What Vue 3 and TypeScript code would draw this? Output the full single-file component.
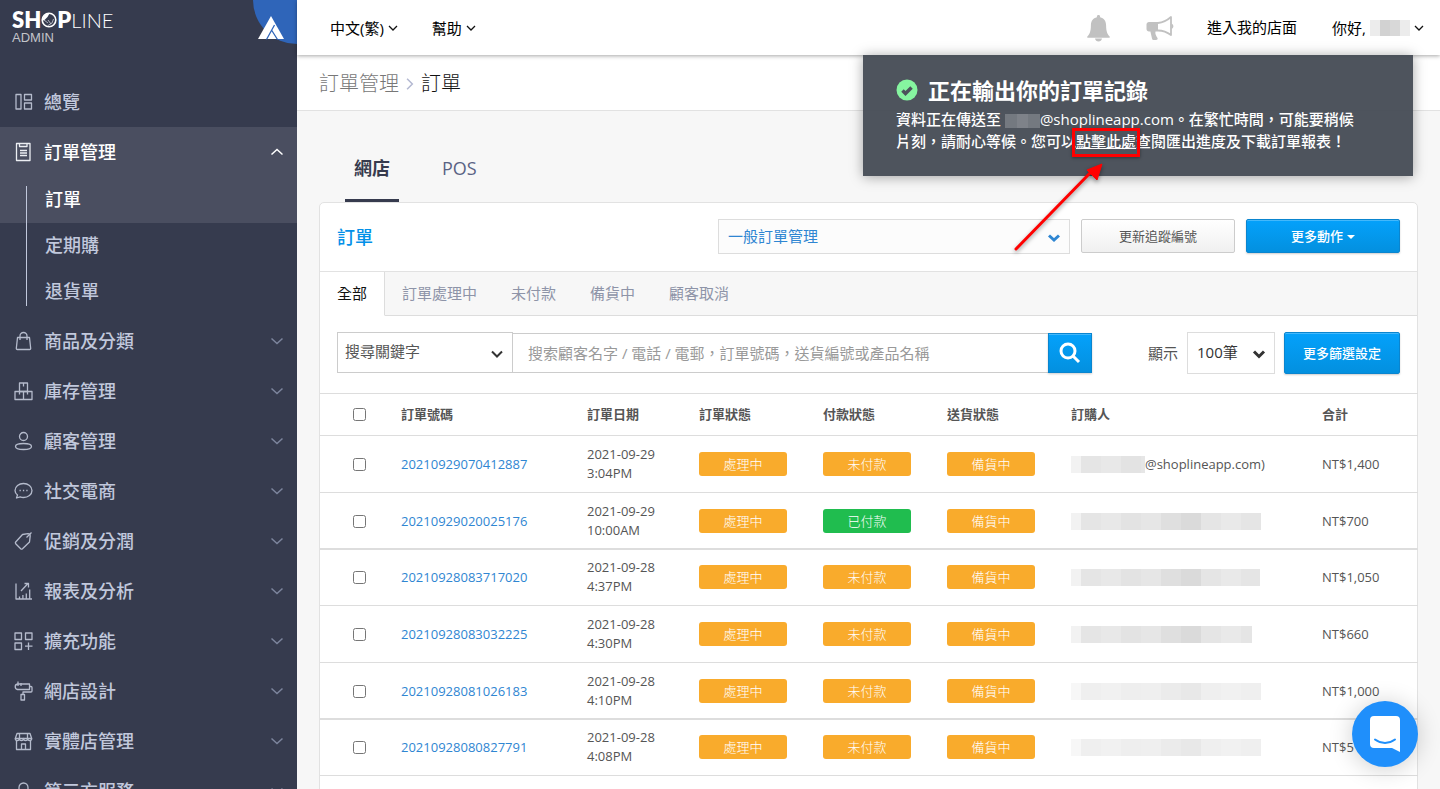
<script setup lang="ts">
interface NavItem {
  label: string
  icon: string[]
}

interface Order {
  id: string
  date: string
  time: string
  payment: string
  paid: boolean
  mask: number[]
  faded: boolean
  suffix: string
  total: string
}

const navItems: NavItem[] = [
  { label: '商品及分類', icon: ['M3.500 6.500h12l1.200 11a1 1 0 0 1-1 1H3.300a1 1 0 0 1-1-1z', 'M6 9V5a3.500 3.500 0 0 1 7 0v4'] },
  { label: '庫存管理', icon: ['M1 10.500h17v8H1z', 'M5.500 2h8v8.500h-8z', 'M9.500 10.500v8', 'M9.500 2v3.500', 'M5.500 10.500v3', 'M13.500 10.500v3'] },
  { label: '顧客管理', icon: ['M9.500 1.500a4 4 0 1 1 0 8a4 4 0 1 1 0-8z', 'M9.500 12.500c4.500 0 8 1 8 3s-3.500 3-8 3s-8-1-8-3s3.500-3 8-3z'] },
  { label: '社交電商', icon: ['M9.500 2.500c4.600 0 8.500 3 8.500 7s-3.900 7-8.500 7c-1.200 0-2.300-.2-3.300-.6L2.500 17l1-3C2 12.800 1 11.200 1 9.500c0-4 3.900-7 8.500-7z', 'M5.500 9.500h1.300M8.900 9.500h1.300M12.300 9.500h1.300'] },
  { label: '促銷及分潤', icon: ['M8.500 3.500l5.500-.8c1 0 2.200 1 2.200 2.200L15.500 11l-7 6.800c-.6.500-1.200.500-1.800 0l-5-5c-.5-.6-.5-1.200 0-1.800z', 'M12.500 6.500l5-5'] },
  { label: '報表及分析', icon: ['M2 2.500v15.500h16', 'M5.500 18v-2.500M8.900 18v-4M12.300 18v-5.500M15.700 18V8.500', 'M7 10l7-7.500M10.500 2.500h4v4'] },
  { label: '擴充功能', icon: ['M1 2h6.500v6.500H1z', 'M11.500 2h6.500v6.500h-6.500z', 'M1 12h6.500v6.500H1z', 'M14.500 11.500v7.500M11 15.200h7.500'] },
  { label: '網店設計', icon: ['M3.500 3h12v5.500h-12a2.800 2.800 0 0 1 0-5.500z', 'M4 .5v4.500M7 2v3', 'M15.500 5.500H17a1 1 0 0 1 1 1V10a1 1 0 0 1-1 1H9v2.500', 'M7 13.500h3.500v5.500H7z'] },
  { label: '實體店管理', icon: ['M3 2.500h13l1.700 5H1.300z', 'M1.300 7.500c0 2.700 4 2.700 4 0c0 2.700 4.200 2.700 4.200 0c0 2.700 4.200 2.700 4.200 0c0 2.700 4 2.700 4 0', 'M2.500 9.500v9h14v-9', 'M7.500 18.500v-5.500h4v5.500', 'M5.500 2.500v5M13.500 2.500v5'] },
  { label: '第三方服務', icon: ['M9.500 2a4.500 4.500 0 0 1 4.500 4.500v3H5v-3A4.500 4.500 0 0 1 9.500 2z', 'M2 9.500h15v9H2z'] },
]

const statusTabs = ['全部', '訂單處理中', '未付款', '備貨中', '顧客取消']

const orders: Order[] = [
  { id: '20210929070412887', date: '2021-09-29', time: '3:04PM', payment: '未付款', paid: false, mask: [10, 20, 20, 20, 4], faded: false, suffix: '@shoplineapp.com)', total: 'NT$1,400' },
  { id: '20210929020025176', date: '2021-09-29', time: '10:00AM', payment: '已付款', paid: true, mask: [10, 20, 20, 20, 20, 20, 20, 20, 20, 20], faded: false, suffix: '', total: 'NT$700' },
  { id: '20210928083717020', date: '2021-09-28', time: '4:37PM', payment: '未付款', paid: false, mask: [10, 20, 20, 20, 20, 20, 20, 20, 20, 19], faded: false, suffix: '', total: 'NT$1,050' },
  { id: '20210928083032225', date: '2021-09-28', time: '4:30PM', payment: '未付款', paid: false, mask: [10, 20, 20, 20, 20, 20, 20, 20, 20, 11], faded: false, suffix: '', total: 'NT$660' },
  { id: '20210928081026183', date: '2021-09-28', time: '4:10PM', payment: '未付款', paid: false, mask: [10, 20, 20, 20, 20, 20, 20, 20, 20, 20], faded: true, suffix: '', total: 'NT$1,000' },
  { id: '20210928080827791', date: '2021-09-28', time: '4:08PM', payment: '未付款', paid: false, mask: [10, 20, 20, 20, 20, 20, 20, 20, 20, 20], faded: true, suffix: '', total: 'NT$5' },
]

const shades = ['#f2f2f2', '#e5e5e5', '#e8e8e8', '#e3e3e3', '#e6e6e6', '#dfdfdf', '#dadada', '#e5e5e5', '#e9e9e9', '#e5e5e5']
</script>

<template>
  <div class="page">
    <aside class="sidebar">
      <div class="brand">
        <a href="#" class="logo" aria-label="SHOPLINE ADMIN">
          <span class="logo-name"><b>SH</b><svg class="logo-o" viewBox="0 0 16 16" aria-hidden="true"><circle cx="8" cy="8" r="6.800" fill="none" stroke="#fff" stroke-width="1.600" /><path d="M1.500 8a6.500 6.500 0 0 1 7-6.500L6.500 5 3 8.500z" fill="#fff" /><path d="M3 8l4 3M7 8l3 4M12.500 7l-1.500 4-4 2.500" fill="none" stroke="#cfd2da" stroke-width=".8" /></svg><b>P</b><span class="thin">LINE</span></span>
          <span class="logo-sub">ADMIN</span>
        </a>
        <svg class="corner" viewBox="0 0 44 44" aria-hidden="true">
          <circle cx="44" cy="0" r="44" fill="#2f65b9" />
          <path d="M18 16l13 23H5z" fill="#fff" />
          <path d="M21.500 25L13.500 39.500M18.500 30l6 9.500" fill="none" stroke="#2f65b9" stroke-width="1.300" />
        </svg>
      </div>

      <nav>
        <a href="#" class="nav-row">
          <svg class="nav-icon" viewBox="0 0 19 20"><path d="M2 2.500h5v14.500H2z" /><path d="M10.500 2.500h7v5.500h-7z" /><path d="M10.500 11h7v6h-7z" /></svg>
          <span>總覽</span>
        </a>
        <div class="group-open">
          <a href="#" class="nav-row active">
            <svg class="nav-icon" viewBox="0 0 19 20"><path d="M2.500 1.500h13.500v17h-13.500z" /><path d="M5.500 1.500v3h7.500v-3" /><path d="M6 8.500h7M6 11h7M6 13.500h7" /></svg>
            <span>訂單管理</span>
            <svg class="chev" viewBox="0 0 14 8"><path d="M1.500 6.500L7 1.500l5.500 5" /></svg>
          </a>
          <div class="sub">
            <a href="#" class="active">訂單</a>
            <a href="#">定期購</a>
            <a href="#">退貨單</a>
          </div>
        </div>
        <a v-for="item in navItems" :key="item.label" href="#" class="nav-row">
          <svg class="nav-icon" viewBox="0 0 19 20"><path v-for="d in item.icon" :key="d" :d="d" /></svg>
          <span>{{ item.label }}</span>
          <svg class="chev" viewBox="0 0 14 8"><path d="M1.500 1.500L7 6.500l5.500-5" /></svg>
        </a>
      </nav>
    </aside>

    <div class="main">
      <header class="topbar">
        <button type="button" class="top-link">中文(繁)<svg class="mini" viewBox="0 0 10 8"><path d="M1 2l4 4 4-4" /></svg></button>
        <button type="button" class="top-link help">幫助<svg class="mini" viewBox="0 0 10 8"><path d="M1 2l4 4 4-4" /></svg></button>
        <div class="top-right">
          <button type="button" class="icon-btn" aria-label="通知">
            <svg class="bell" viewBox="0 0 24 28"><path d="M12 1c1 0 1.600.7 1.600 1.600v.7c3.800.8 6 3.700 6 8.200 0 6 1.400 8.800 3.600 11v1.200H.8v-1.200c2.200-2.200 3.600-5 3.600-11 0-4.500 2.200-7.400 6-8.200v-.7C10.400 1.700 11 1 12 1z" /><path d="M8.500 24.500h7c-.3 1.800-1.700 3-3.500 3s-3.200-1.200-3.500-3z" /></svg>
          </button>
          <button type="button" class="icon-btn horn-btn" aria-label="公告">
            <svg class="horn" viewBox="0 0 28 26"><path d="M3 7h9v9.500H9.500c-.8 2 .8 4.500 2 6.500.5 1.200-.2 2-1.500 2H7.800c-1 0-1.500-.5-1.800-1.500l-1.600-7H3c-1.400 0-2.500-1-2.500-2.500V9.500C.5 8 1.600 7 3 7z" /><path d="M12 8c5-.5 9-2.500 13-6v18c-4-3-8-4.500-13-4.500" fill="none" stroke="#c1c1c1" stroke-width="1.800" stroke-linejoin="round" /><path d="M25.500 8.500c2.500 1 2.500 4.500 0 5.500z" /></svg>
          </button>
          <a href="#" class="top-text">進入我的店面</a>
          <button type="button" class="top-link user">你好,<span class="user-mask"><i /><i /><i /><i /></span><svg class="mini" viewBox="0 0 10 8"><path d="M1 2l4 4 4-4" /></svg></button>
        </div>
      </header>

      <div class="crumbs">
        <a href="#">訂單管理</a>
        <svg viewBox="0 0 8 12"><path d="M1.500 1.500L6 6l-4.500 4.500" /></svg>
        <span>訂單</span>
      </div>

      <main class="content">
        <div class="shop-tabs">
          <button type="button" class="on">網店</button>
          <button type="button">POS</button>
        </div>

        <section class="card">
          <div class="card-head">
            <h1>訂單</h1>
            <div class="select-wrap mode">
              <select aria-label="訂單管理模式"><option>一般訂單管理</option></select>
              <svg viewBox="0 0 14 10"><path d="M2 2.500l5 4.500 5-4.500" /></svg>
            </div>
            <button type="button" class="btn plain">更新追蹤編號</button>
            <button type="button" class="btn blue">更多動作<i class="caret" /></button>
          </div>

          <div class="status-tabs">
            <button v-for="(t, i) in statusTabs" :key="t" type="button" :class="{ on: i === 0 }">{{ t }}</button>
            <span class="fill" />
          </div>

          <form class="filters" @submit.prevent>
            <div class="search">
              <div class="select-wrap keyword">
                <select aria-label="搜尋欄位"><option>搜尋關鍵字</option></select>
                <svg viewBox="0 0 14 10"><path d="M2 2.500l5 5 5-5" /></svg>
              </div>
              <input type="text" aria-label="搜尋" placeholder="搜索顧客名字 / 電話 / 電郵，訂單號碼，送貨編號或產品名稱">
              <button type="submit" class="btn blue go" aria-label="搜尋">
                <svg viewBox="0 0 22 22"><circle cx="9" cy="9" r="7" /><path d="M14 14l6 6" /></svg>
              </button>
            </div>
            <label for="page-size">顯示</label>
            <div class="select-wrap size">
              <select id="page-size"><option>100筆</option></select>
              <svg viewBox="0 0 14 10"><path d="M2 2.500l5 5 5-5" /></svg>
            </div>
            <button type="button" class="btn blue more">更多篩選設定</button>
          </form>

          <table>
            <colgroup>
              <col class="c-check"><col class="c-id"><col class="c-date"><col class="c-state"><col class="c-state"><col class="c-ship"><col class="c-buyer"><col class="c-total">
            </colgroup>
            <thead>
              <tr>
                <th class="check"><input type="checkbox" aria-label="全選"></th>
                <th>訂單號碼</th>
                <th>訂單日期</th>
                <th>訂單狀態</th>
                <th>付款狀態</th>
                <th>送貨狀態</th>
                <th>訂購人</th>
                <th>合計</th>
              </tr>
            </thead>
            <tbody>
              <tr v-for="o in orders" :key="o.id">
                <td class="check"><input type="checkbox" :aria-label="o.id"></td>
                <td><a href="#">{{ o.id }}</a></td>
                <td>{{ o.date }}<br>{{ o.time }}</td>
                <td><span class="badge">處理中</span></td>
                <td><span class="badge" :class="{ green: o.paid }">{{ o.payment }}</span></td>
                <td><span class="badge">備貨中</span></td>
                <td>
                  <div class="buyer">
                    <span class="mask" :class="{ faded: o.faded }"><i v-for="(w, i) in o.mask" :key="i" :style="{ width: w + 'px', background: shades[i] }" /></span>{{ o.suffix }}
                  </div>
                </td>
                <td>{{ o.total }}</td>
              </tr>
            </tbody>
          </table>
        </section>
      </main>
    </div>

    <div class="toast" role="status">
      <h2>
        <svg viewBox="0 0 22 22" aria-hidden="true"><circle cx="11" cy="11" r="10.500" fill="#86f5a0" /><path d="M6.500 11.500l3 3 6-6" fill="none" stroke="#4c535b" stroke-width="3.500" /></svg>
        正在輸出你的訂單記錄
      </h2>
      <p>資料正在傳送至 <span class="mail-mask"><i /><i /><i /></span>@shoplineapp.com。在繁忙時間，可能要稍候<br>片刻，請耐心等候。您可以<span class="spot"><a href="#">點擊此處</a><svg class="arrow" viewBox="0 0 100 100" aria-hidden="true"><path d="M13 92L88 15" stroke="#f00" stroke-width="3" stroke-linecap="round" /><path d="M99 7L84 13l10 10z" fill="#f00" stroke="#f00" stroke-width="1" /></svg></span>查閱匯出進度及下載訂單報表！</p>
    </div>

    <button type="button" class="chat" aria-label="開啟對話">
      <svg viewBox="0 0 30 36"><path d="M4 0h22a4 4 0 0 1 4 4v32l-8-4H4a4 4 0 0 1-4-4V4a4 4 0 0 1 4-4z" fill="#fff" /><path d="M5 23.500c6 4.500 14 4.500 20 0" fill="none" stroke="#1f8ffb" stroke-width="2" stroke-linecap="round" /></svg>
    </button>
  </div>
</template>

<style>
body {
  background: #f7f7f7;
}
</style>

<style scoped>
.page {
  display: flex;
  align-items: stretch;
  height: 100vh;
  overflow: hidden;
  position: relative;
  color: #555;
  font: 13px/19px "Open Sans", "Noto Sans CJK TC", sans-serif;
  background: #f7f7f7;
}

.page *,
.page *::before,
.page *::after {
  box-sizing: border-box;
}

a {
  color: inherit;
  text-decoration: none;
}

button,
input,
select {
  font-family: inherit;
  margin: 0;
}

button {
  border: 0;
  padding: 0;
  background: none;
  color: inherit;
}

/* sidebar */
.sidebar {
  flex: 0 0 297px;
  background: #363b4e;
  color: #c1c8dc;
  overflow: hidden;
}

.brand {
  display: flex;
  justify-content: space-between;
  align-items: flex-start;
  height: 77px;
}

.logo {
  display: flex;
  flex-direction: column;
  padding: 9px 0 0 12px;
  color: #fff;
  font-family: Lato, sans-serif;
}

.logo-name {
  display: flex;
  align-items: center;
  font-size: 22px;
  line-height: 22px;
}

.logo-name b {
  font-weight: 800;
}

.thin {
  font-size: 20px;
  font-weight: 300;
}

.logo-o {
  width: 16px;
  height: 16px;
}

.logo-sub {
  color: #c3c4ca;
  font: 13px/13px "Liberation Sans", sans-serif;
}

.corner {
  width: 44px;
  height: 44px;
  overflow: visible;
}

.nav-row {
  display: flex;
  align-items: center;
  gap: 11px;
  height: 50px;
  padding: 0 13px 0 14px;
  font-size: 18px;
  font-weight: 500;
}

.nav-row.active,
.sub .active {
  color: #fff;
  background: #4a4e60;
}

.nav-icon {
  width: 19px;
  height: 20px;
  fill: none;
  stroke: #b5bbcc;
  stroke-width: 1.300;
  stroke-linejoin: round;
}

.active .nav-icon {
  stroke: #eceef3;
}

.chev {
  width: 14px;
  height: 8px;
  margin-left: auto;
  fill: none;
  stroke: #7d859d;
  stroke-width: 1.500;
}

.active .chev {
  stroke: #fff;
}

.sub {
  position: relative;
  padding-bottom: 1px;
}

.sub a {
  display: block;
  height: 46px;
  padding-left: 45px;
  font-size: 18px;
  line-height: 45px;
  font-weight: 500;
}

.sub::before {
  content: "";
  position: absolute;
  left: 26px;
  top: 9px;
  bottom: 10px;
  width: 1px;
  background: #c1c8dc;
}

/* top bar */
.main {
  flex: 1;
  min-width: 0;
}

.topbar {
  position: relative;
  display: flex;
  align-items: center;
  height: 55px;
  padding: 0 16px 0 33px;
  background: #fff;
  box-shadow: 0 1px 4px rgba(0, 0, 0, .35);
  color: #000;
  font-size: 15px;
}

.top-link {
  display: flex;
  align-items: center;
  gap: 4px;
  font-size: 15px;
  line-height: 22px;
}

.help {
  margin-left: 34px;
}

.mini {
  width: 10px;
  height: 8px;
  fill: none;
  stroke: #111;
  stroke-width: 1.300;
}

.top-right {
  display: flex;
  align-items: center;
  margin-left: auto;
}

.icon-btn svg {
  display: block;
  fill: #c1c1c1;
}

.bell {
  width: 25px;
  height: 28px;
}

.horn {
  width: 28px;
  height: 26px;
}

.horn-btn {
  margin: 0 33px 0 35px;
}

.user {
  margin-left: 35px;
}

.user-mask {
  display: flex;
  width: 40px;
  height: 16px;
}

.user-mask i {
  flex: 1;
  background: #ececec;
}

.user-mask i:nth-child(2) {
  background: #d2d2d2;
}

.user-mask i:nth-child(3) {
  background: #d8d8d8;
}

/* breadcrumb */
.crumbs {
  display: flex;
  align-items: center;
  gap: 6px;
  height: 56px;
  padding: 2px 0 0 22px;
  border-bottom: 1px solid #e2e2e2;
  background: #fff;
  font-size: 20px;
  font-weight: 300;
  line-height: 28px;
  color: #111;
}

.crumbs a {
  color: #777;
}

.crumbs svg {
  width: 10px;
  height: 14px;
  fill: none;
  stroke: #b4b9d2;
  stroke-width: 1.300;
}

/* content */
.content {
  padding: 23px 22px 0;
}

.shop-tabs {
  display: flex;
  gap: 34px;
  padding-left: 26px;
}

.shop-tabs button {
  height: 68px;
  padding: 2px 9px 0;
  border-bottom: 3px solid transparent;
  font-size: 18px;
  line-height: 24px;
  color: #5a6384;
}

.shop-tabs .on {
  border-color: #363b4e;
  color: #363b4e;
  font-weight: 700;
}

.card {
  border: 1px solid #e2e2e2;
  border-radius: 5px 5px 0 0;
  background: #fff;
  min-height: 100vh;
}

.card-head {
  display: flex;
  align-items: flex-start;
  gap: 11px;
  padding: 16px 17px;
  border-bottom: 1px solid #e2e2e2;
}

h1 {
  flex: 1;
  margin: 0;
  color: #0390e8;
  font-size: 18px;
  font-weight: 500;
  line-height: 36px;
}

.select-wrap {
  position: relative;
}

.select-wrap select {
  display: block;
  width: 100%;
  height: 100%;
  padding: 0 9px 2px;
  border: 1px solid #ddd;
  border-radius: 0;
  appearance: none;
  background: #fff;
  color: #333;
  font-size: 15px;
}

.select-wrap svg {
  position: absolute;
  right: 9px;
  top: 50%;
  width: 14px;
  height: 10px;
  margin-top: -4px;
  fill: none;
  stroke: #333;
  stroke-width: 2;
  pointer-events: none;
}

.mode {
  flex: 0 1 352px;
  height: 35px;
}

.mode select {
  background: #fcfcfc;
  color: #2f86d2;
}

.mode svg {
  stroke: #2f86d2;
  stroke-width: 3;
}

.btn {
  flex: none;
  width: 154px;
  height: 34px;
  border: 1px solid #0a85cf;
  border-radius: 2px;
  font-size: 13px;
  line-height: 20px;
}

.blue {
  background: linear-gradient(#04a1fb, #0390df);
  box-shadow: inset 0 1px rgba(255, 255, 255, .25), 0 1px 2px rgba(0, 0, 0, .2);
  color: #fff;
  font-weight: 500;
}

.plain {
  border-color: #ccc;
  background: linear-gradient(#fff, #f0f0f0);
  color: #555;
}

.caret {
  display: inline-block;
  margin: 0 0 2px 4px;
  border: 4px solid transparent;
  border-top-color: #fff;
  border-bottom: 0;
}

.status-tabs {
  display: flex;
  height: 44px;
  background: #f7f7f7;
}

.status-tabs button {
  padding: 0 17px 2px;
  border-bottom: 1px solid #ddd;
  color: #8e94a8;
  font-size: 15px;
}

.status-tabs .on {
  border-right: 1px solid #ddd;
  border-bottom-color: #fff;
  background: #fff;
  color: #111;
}

.fill {
  flex: 1;
  border-bottom: 1px solid #ddd;
}

.filters {
  display: flex;
  align-items: center;
  gap: 9px;
  padding: 16px 17px 19px;
}

.search {
  display: flex;
  align-items: flex-end;
  align-self: flex-start;
  flex: 1;
  margin-right: 47px;
}

.keyword {
  width: 176px;
  height: 41px;
}

.keyword select {
  padding: 0 7px 4px;
  border-color: #ccc;
  color: #555;
}

.search input {
  flex: 1;
  min-width: 0;
  height: 40px;
  padding: 0 15px;
  border: 1px solid #ccc;
  border-left: 0;
  border-right: 0;
  border-radius: 0;
  background: #fff;
  color: #555;
  font-size: 15px;
}

.search input::placeholder {
  color: #999;
}

.go {
  display: grid;
  place-items: center;
  width: 44px;
  height: 40px;
  border-radius: 0;
}

.go svg {
  width: 22px;
  height: 22px;
  fill: none;
  stroke: #fff;
  stroke-width: 3;
}

.filters label {
  font-size: 15px;
}

.size {
  width: 88px;
  height: 42px;
}

.size svg {
  stroke-width: 3;
}

.more {
  width: 116px;
  height: 42px;
}

/* orders table */
table {
  width: 100%;
  table-layout: fixed;
  border-collapse: separate;
  border-spacing: 0;
}

.c-check { width: 66px; }
.c-id { width: 186px; }
.c-date { width: 112px; }
.c-state { width: 124px; }
.c-ship { width: 124px; }
.c-buyer { width: 251px; }
.c-total { width: 111px; }

th,
td {
  padding: 9px 0 9px 15px;
  border-bottom: 1px solid #ddd;
  text-align: left;
  vertical-align: middle;
}

th {
  height: 43px;
  padding: 0 0 0 15px;
  border-top: 1px solid #ddd;
  font-weight: 700;
}

tbody tr:nth-child(3n + 2) td {
  padding-bottom: 8px;
  border-bottom-width: 2px;
}

tbody tr:nth-child(3n) td {
  padding-top: 8px;
}

.check input {
  display: block;
  width: 13px;
  height: 13px;
  margin-left: 18px;
}

td a {
  color: #2f86d2;
}

.badge {
  display: block;
  width: 88px;
  border-radius: 3px;
  background: #f9ab2c;
  color: #fff;
  font-weight: 300;
  line-height: 24px;
  text-align: center;
}

.badge.green {
  background: #20bd4f;
}

.buyer {
  display: flex;
  align-items: center;
}

.mask {
  display: flex;
  height: 17px;
}

.mask.faded {
  opacity: .6;
}

/* export notice */
.toast {
  position: absolute;
  top: 55px;
  right: 27px;
  width: 550px;
  padding: 23px 33px 24px;
  background: rgba(68, 75, 84, .95);
  box-shadow: 0 1px 12px rgba(0, 0, 0, .35);
  color: #fff;
  font-size: 15px;
  font-weight: 500;
  line-height: 22px;
  white-space: nowrap;
}

.toast h2 {
  display: flex;
  align-items: center;
  gap: 10px;
  margin: 0 0 6px;
  font-size: 22px;
  font-weight: 700;
  line-height: 24px;
}

.toast h2 svg {
  width: 22px;
  height: 22px;
}

.toast p {
  margin: 0;
}

.mail-mask {
  display: inline-flex;
  width: 35px;
  height: 14px;
  vertical-align: middle;
}

.mail-mask i {
  flex: 1;
  background: #747980;
}

.mail-mask i:nth-child(2) {
  background: #7e8289;
}

.spot {
  position: relative;
}

.spot a {
  text-decoration: underline;
}

.spot::before {
  content: "";
  position: absolute;
  inset: -3px -4px -6px;
  border: 3px solid #f00;
  box-shadow: 0 1px 3px rgba(0, 0, 0, .4);
}

.arrow {
  position: absolute;
  left: -73px;
  top: 26px;
  width: 100px;
  height: 100px;
  filter: drop-shadow(0 2px 2px rgba(0, 0, 0, .4));
}

/* chat launcher */
.chat {
  position: absolute;
  right: 22px;
  bottom: 22px;
  display: grid;
  place-items: center;
  width: 66px;
  height: 66px;
  border-radius: 50%;
  background: #1f8ffb;
  box-shadow: 0 2px 24px rgba(0, 0, 0, .2);
}

.chat svg {
  width: 30px;
  height: 36px;
}
</style>
